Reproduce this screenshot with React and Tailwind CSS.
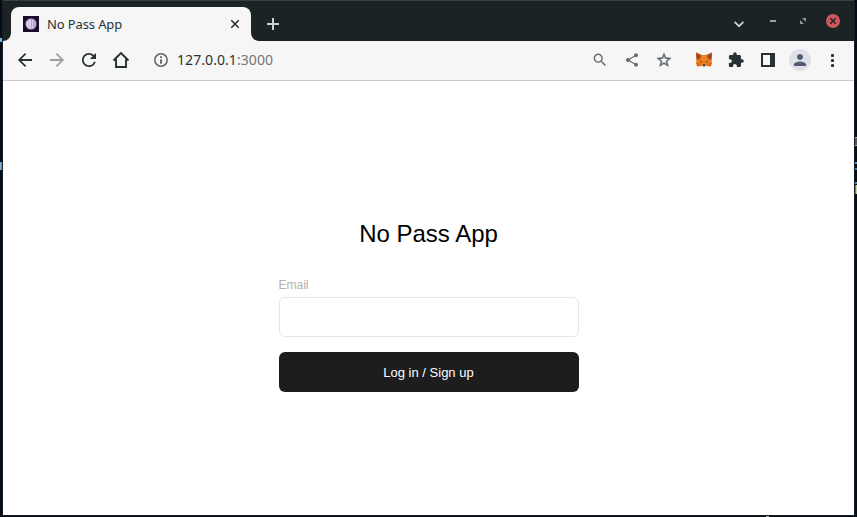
import {
  MdArrowBack,
  MdArrowForward,
  MdRefresh,
  MdSearch,
  MdShare,
  MdExtension,
  MdPerson,
} from "react-icons/md";

const LARGE_BOX = "-0.57 -0.57 25.14 25.14";
const SMALL_BOX = "-0.7 -0.7 25.4 25.4";

function Slot({ children }) {
  return <div className="flex h-8 w-8 shrink-0 items-center justify-center">{children}</div>;
}

function MoonIcon() {
  return (
    <svg className="h-4 w-4 shrink-0" viewBox="0 0 16 16">
      <rect width="16" height="16" fill="#190b2b" />
      <circle cx="8" cy="8" r="6.2" fill="#46305c" />
      <circle cx="8" cy="8" r="5.2" fill="#d9cae6" />
      <path d="M8 2.800a5.200 5.200 0 0 1 0 10.400z" fill="#b9a6cc" />
      <path d="M9.500 3.300v9.400" stroke="#d3c4e0" strokeWidth="1" />
    </svg>
  );
}

function FoxIcon() {
  return (
    <svg className="h-4 w-4" viewBox="0 0 16 16">
      <path d="M0 .5 5.500 3h5L16 .5l-.5 7 .5 3.500-1.300 3.500-4.200-.8L9.300 15H6.700l-1.200-1.300-4.200.8L0 11l.5-3.500z" fill="#f0801f" />
      <path d="M0 .5 5.500 3l-.8 3L3.500 8H.5zM16 .5 10.500 3l.8 3 1.200 2h3z" fill="#b9591b" />
      <path d="m.8 1.800 3.400 3.400L1 6zM15.200 1.800l-3.400 3.400L15 6z" fill="#8a441c" />
      <path d="M0 11h4.500l1 2.700-4.200.8zM16 11h-4.500l-1 2.700 4.200.8z" fill="#dc6a18" />
      <path d="m3.900 9.300 2.400.2-.3 1.400zM12.100 9.300l-2.400.2.3 1.400z" fill="#3d3b40" />
      <path d="m5.500 13 1.200 2h2.600l1.200-2-2.500-.7z" fill="#c9b8aa" />
      <path d="M6.700 12.300h2.600l-.2 1.500H6.900z" fill="#25211f" />
    </svg>
  );
}

function InfoIcon() {
  return (
    <svg className="h-[18px] w-[18px] shrink-0 text-[#5f6366]" viewBox="0 0 18 18">
      <circle cx="9" cy="9" r="6.200" fill="none" stroke="currentColor" strokeWidth="1.500" />
      <path d="M8.100 5.300h1.800v1.700H8.100zM8.100 8.200h1.800v4.500H8.100z" fill="currentColor" />
    </svg>
  );
}

function StarIcon() {
  return (
    <svg className="h-[18px] w-[18px]" viewBox={SMALL_BOX} fill="currentColor" stroke="currentColor" strokeWidth="0.700">
      <path d="m22 9.240-7.190-.62L12 2 9.190 8.630 2 9.240l5.460 4.730L5.820 21 12 17.270 18.180 21l-1.630-7.030L22 9.240zM12 15.400l-3.760 2.270 1-4.280-3.320-2.880 4.380-.38L12 6.100l1.710 4.040 4.380.38-3.320 2.880 1 4.280L12 15.400z" />
    </svg>
  );
}

function MenuDots() {
  return (
    <svg className="ml-px h-[15px] w-[3px]" viewBox="0 0 3 15" fill="currentColor">
      <circle cx="1.500" cy="2.500" r="1.600" />
      <circle cx="1.500" cy="7.500" r="1.600" />
      <circle cx="1.500" cy="12.500" r="1.600" />
    </svg>
  );
}

function TitleBar() {
  return (
    <div className="flex h-[41px] items-end border-t border-[#39403f] bg-[#1c2324]">
      <svg className="h-[34px] w-2 shrink-0" viewBox="0 0 8 34">
        <path d="M8 26v8H0a8 8 0 0 0 8-8z" fill="#f6f6f6" />
      </svg>
      <div className="flex h-[34px] w-60 shrink-0 items-center rounded-t-lg bg-[#f6f6f6] pl-3 pr-[11px]">
        <MoonIcon />
        <span className="ml-2 flex-1 whitespace-nowrap text-[13px] leading-4 tracking-[-0.12px] text-[#273338]">No Pass App</span>
        <svg className="h-[10px] w-[10px]" viewBox="0 0 10 10">
          <path d="m1.300 1.300 7.400 7.400m0-7.400L1.300 8.700" stroke="#273033" strokeWidth="1.600" />
        </svg>
      </div>
      <svg className="h-[34px] w-2 shrink-0" viewBox="0 0 8 34">
        <path d="M0 26v8h8a8 8 0 0 1-8-8z" fill="#f6f6f6" />
      </svg>
      <div className="flex h-[34px] flex-1 items-center pl-2">
        <svg className="h-3 w-3" viewBox="0 0 12 12">
          <path d="M6 0v12M0 6h12" stroke="#cbd0cf" strokeWidth="2" />
        </svg>
      </div>
      <div className="flex h-10 items-center pr-[14px]">
        <svg className="mr-[26px] mt-[7px] h-[7px] w-[10px]" viewBox="0 0 10 7">
          <path d="m.6.8 4.400 4.400L9.400.8" fill="none" stroke="#cbd0cf" strokeWidth="1.700" />
        </svg>
        <svg className="mr-6 h-[2px] w-[6px]" viewBox="0 0 6 2">
          <path d="M0 0h6v2H0z" fill="#9ba09f" />
        </svg>
        <svg className="mr-[20px] h-[6px] w-[6px]" viewBox="0 0 6 6">
          <path d="M2 0h4v4zM0 2l4 4H0z" fill="#8e9493" />
        </svg>
        <svg className="h-[14px] w-[14px]" viewBox="0 0 14 14">
          <circle cx="7" cy="7" r="7" fill="#cc575d" />
          <path d="m4.300 4.300 5.400 5.400m0-5.400L4.300 9.700" stroke="#1c2324" strokeWidth="1.500" />
        </svg>
      </div>
    </div>
  );
}

function Toolbar() {
  return (
    <div className="flex h-10 items-start border-b border-[#cbcbcb] bg-[#f6f6f6] px-[6px] pt-[3px] text-[#273033]">
      <Slot><MdArrowBack size={22} viewBox={LARGE_BOX} /></Slot>
      <Slot><MdArrowForward size={22} viewBox={LARGE_BOX} className="text-[#9c9e9f]" /></Slot>
      <Slot><MdRefresh size={22} viewBox={LARGE_BOX} /></Slot>
      <Slot>
        <svg className="h-[18px] w-[18px]" viewBox="0 0 18 18">
          <path d="M1.500 9.500 9 2l7.500 7.500M4 8v8h10V8" fill="none" stroke="currentColor" strokeWidth="1.900" />
        </svg>
      </Slot>
      <div className="ml-[15px] flex h-8 flex-1 items-center">
        <InfoIcon />
        <span className="ml-[7px] whitespace-nowrap text-[14px] leading-5 tracking-[0.07px] text-[#273338]">
          127.0.0.1<span className="text-[#737578]">:3000</span>
        </span>
      </div>
      <div className="mr-2 flex text-[#636b6e]">
        <Slot><MdSearch size={18} viewBox={SMALL_BOX} /></Slot>
        <Slot><MdShare size={16} /></Slot>
        <Slot><StarIcon /></Slot>
      </div>
      <Slot><FoxIcon /></Slot>
      <Slot><MdExtension size={18} viewBox={SMALL_BOX} /></Slot>
      <Slot>
        <svg className="h-[14px] w-[14px]" viewBox="0 0 14 14">
          <path d="M0 0h14v14H0zM2 2v10h7V2z" fillRule="evenodd" fill="currentColor" />
        </svg>
      </Slot>
      <Slot>
        <div className="flex h-[22px] w-[22px] items-center justify-center rounded-full bg-[#dfe1e6]">
          <MdPerson size={18} className="text-[#525b74]" />
        </div>
      </Slot>
      <Slot><MenuDots /></Slot>
    </div>
  );
}

function LoginForm() {
  return (
    <div className="flex flex-1 flex-col items-center bg-white font-['Liberation_Sans',Arial,sans-serif]">
      <h1 className="mt-[137px] text-2xl text-black">No Pass App</h1>
      <div className="mt-[27px] flex w-[300px] flex-col">
        <label className="text-xs text-[#b0b0b0]">Email</label>
        <input className="mt-1 h-10 rounded-md border border-[#e6e6e6] bg-white px-3 outline-none" type="email" />
        <button className="mt-[15px] h-10 rounded-md bg-[#1d1d1d] pt-[2px] text-[13px] text-white">Log in / Sign up</button>
      </div>
    </div>
  );
}

export default function App() {
  return (
    <div className="relative flex h-[517px] w-[857px] overflow-hidden bg-[#070d16] px-[2px] pb-px font-['Noto_Sans',sans-serif]">
      <div className="flex flex-1 flex-col border-x border-b border-[#151d21]">
        <TitleBar />
        <Toolbar />
        <LoginForm />
      </div>
      <div className="absolute left-0 top-[38px] h-1 w-[2px] bg-[#6eb6e8]" />
      <div className="absolute left-0 top-[162px] h-2 w-[2px] border-r border-[#b08f6c] bg-[#75a9cf]" />
      <div className="absolute right-0 top-[137px] h-[9px] w-[2px] border-y border-[#a5adb8] bg-[#59565a]" />
      <div className="absolute right-0 top-[162px] h-[2px] w-[2px] bg-[#4b9bdc]" />
      <div className="absolute right-0 top-[168px] h-[2px] w-[2px] bg-[#3c78ad]" />
      <div className="absolute right-0 top-[182px] h-[2px] w-[2px] bg-[#4b8bb9]" />
      <div className="absolute right-0 top-[185px] h-[9px] w-[2px] border-l border-[#3789bd] bg-[#c6d6a0]" />
      <div className="absolute bottom-0 left-[766px] h-px w-[3px] bg-[#a6adb5]" />
    </div>
  );
}
